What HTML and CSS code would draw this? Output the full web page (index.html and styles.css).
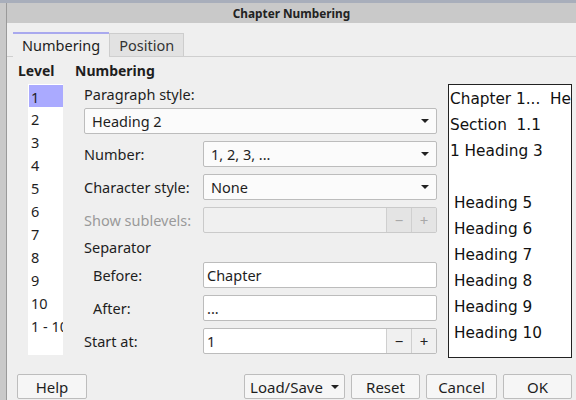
FILE: index.html
```html
<!DOCTYPE html>
<html>
<head>
<meta charset="utf-8">
<link rel="stylesheet" href="styles.css">
</head>
<body>
<div class="desk">
  <div class="window">
    <div class="titlebar">Chapter Numbering</div>
    <div class="content">
      <div class="tabs">
        <div class="tab active">Numbering</div>
        <div class="tab">Position</div>
      </div>
      <div class="page">
        <div class="levelcol">
          <div class="hdr">Level</div>
          <div class="levellist">
            <div class="lv sel">1</div>
            <div class="lv">2</div>
            <div class="lv">3</div>
            <div class="lv">4</div>
            <div class="lv">5</div>
            <div class="lv">6</div>
            <div class="lv">7</div>
            <div class="lv">8</div>
            <div class="lv">9</div>
            <div class="lv">10</div>
            <div class="lv">1 - 10</div>
          </div>
        </div>
        <div class="numcol">
          <div class="hdr">Numbering</div>
          <div class="form">
            <div class="plabel">Paragraph style:</div>
            <div class="combo wide"><span>Heading 2</span><i class="arrow"></i></div>
            <div class="row">
              <div class="lbl">Number:</div>
              <div class="combo"><span>1, 2, 3, ...</span><i class="arrow"></i></div>
            </div>
            <div class="row">
              <div class="lbl">Character style:</div>
              <div class="combo"><span>None</span><i class="arrow"></i></div>
            </div>
            <div class="row">
              <div class="lbl dis">Show sublevels:</div>
              <div class="spin disabled"><span class="val"></span><span class="sb">−</span><span class="sb">+</span></div>
            </div>
            <div class="seplabel">Separator</div>
            <div class="row">
              <div class="lbl ind">Before:</div>
              <div class="entry">Chapter</div>
            </div>
            <div class="row">
              <div class="lbl ind">After:</div>
              <div class="entry">...</div>
            </div>
            <div class="row">
              <div class="lbl">Start at:</div>
              <div class="spin"><span class="val">1</span><span class="sb">−</span><span class="sb">+</span></div>
            </div>
          </div>
        </div>
        <div class="preview">
          <div class="pl">Chapter 1...&nbsp; Heading 1</div>
          <div class="pl">Section&nbsp; 1.1</div>
          <div class="pl">1 Heading 3</div>
          <div class="pl"></div>
          <div class="pl ind">Heading 5</div>
          <div class="pl ind">Heading 6</div>
          <div class="pl ind">Heading 7</div>
          <div class="pl ind">Heading 8</div>
          <div class="pl ind">Heading 9</div>
          <div class="pl ind">Heading 10</div>
        </div>
      </div>
      <div class="buttons">
        <div class="btn help">Help</div>
        <div class="spacer"></div>
        <div class="btn loadsave">Load/Save <i class="arrow"></i></div>
        <div class="btn reset">Reset</div>
        <div class="btn cancel">Cancel</div>
        <div class="btn ok">OK</div>
      </div>
    </div>
  </div>
</div>
</body>
</html>
```
FILE: styles.css
```css
* { box-sizing: border-box; }
html, body { margin: 0; padding: 0; }
body {
  width: 576px; height: 400px; overflow: hidden;
  background: #c9c9c9;
  font-family: "Noto Sans", "Open Sans", sans-serif;
  font-size: 14.5px;
  color: #1e1e1e;
}
.desk {
  height: 400px;
  border-top: 3px solid #a8aebb;
  padding-left: 6px;
}
.window {
  height: 397px;
  border-left: 1px solid #9a9a9a;
  background: #efefef;
  display: flex; flex-direction: column;
}
.titlebar {
  height: 20px;
  background: #c9c9c9;
  font-weight: bold;
  font-size: 11.8px;
  text-align: center;
  line-height: 20px;
  color: #222;
}
.content { flex: 1; display: flex; flex-direction: column; }
.tabs {
  display: flex; align-items: flex-end;
  padding-left: 6px;
  margin-top: 9px;
  height: 25px;
  border-bottom: 1px solid #cfcfcf;
}
.tab {
  height: 23px;
  padding: 0 9px;
  line-height: 22px;
  font-size: 14.5px;
  background: #e2e2e2;
  border: 1px solid #cdcdcd;
  border-bottom: none;
  color: #333;
}
.tab.active {
  height: 25px;
  background: #efefef;
  border: none;
  border-top: 2px solid #a9a9ee;
  padding: 0 9px;
  line-height: 23px;
  margin-bottom: -1px;
  color: #1e1e1e;
}
.page {
  display: flex;
  padding-left: 11px;
  margin-top: 5px;
  height: 296px;
}
.hdr {
  font-weight: bold;
  height: 18px; line-height: 18px;
  font-size: 14px;
}
.levelcol { width: 46px; }
.levellist {
  margin-top: 4px;
  margin-left: 10px;
  width: 35px;
  height: 271px;
  background: #fff;
  overflow: hidden;
  white-space: nowrap;
  padding-top: 1px;
  padding-left: 1px;
}
.lv {
  height: 23px; line-height: 24px;
  padding-left: 2px;
  font-size: 14.5px;
}
.lv.sel { background: #aaaaff; height: 22px; }
.numcol { width: 362px; margin-left: 11px; }
.form { margin-top: 4px; padding-left: 9px; display: flex; flex-direction: column; }
.plabel { height: 20px; line-height: 20px; }
.combo, .entry, .spin {
  height: 26px;
  border: 1px solid #bcbcbc;
  border-radius: 2px;
  background: #fbfbfb;
  display: flex; align-items: center;
}
.combo { padding: 0 7px 0 7px; justify-content: space-between; }
.entry { background: #fff; padding-left: 3px; }
.combo.wide { margin-top: 4px; width: 353px; }
.arrow {
  display: inline-block;
  width: 0; height: 0;
  border-left: 4px solid transparent;
  border-right: 4px solid transparent;
  border-top: 4px solid #222;
}
.row { display: flex; align-items: center; margin-top: 7px; height: 26px; }
.lbl { width: 119px; }
.lbl.ind { padding-left: 9px; }
.lbl.dis { color: #9a9a9a; }
.row > .combo, .row > .entry, .row > .spin { width: 234px; }
.spin { background: #fff; overflow: hidden; }
.spin .val { flex: 1; padding-left: 3px; }
.spin .sb {
  width: 25px; height: 100%;
  border-left: 1px solid #cfcfcf;
  background: #f0f0f0;
  display: flex; align-items: center; justify-content: center;
  font-size: 15px; color: #222;
}
.spin.disabled { background: #f0f0f0; border-color: #cacaca; }
.spin.disabled .sb { background: #e4e4e4; color: #a8a8a8; }
.seplabel { margin-top: 7px; height: 15px; line-height: 15px; }
.preview {
  margin-left: 11px;
  width: 124px; height: 274px;
  margin-top: 22px;
  background: #fff;
  border: 1px solid #222;
  font-family: "DejaVu Sans", sans-serif;
  font-size: 15.3px;
  overflow: hidden;
  white-space: nowrap;
  padding-top: 1px;
  padding-left: 1px;
  color: #111;
}
.pl { height: 26px; line-height: 26px; }
.pl.ind { padding-left: 4px; }
.buttons {
  display: flex;
  padding: 0 4px 0 10px;
  margin-top: 16px;
  gap: 6px;
}
.spacer { flex: 1; }
.btn {
  height: 25px;
  border: 1px solid #bdbdbd;
  border-radius: 2px;
  background: #f6f6f6;
  display: flex; align-items: center; justify-content: center;
  font-size: 15px;
}
.btn.help { width: 70px; }
.btn.loadsave { width: 101px; gap: 8px; }
.btn.reset { width: 69px; }
.btn.cancel { width: 71px; }
.btn.ok { width: 69px; }
```
